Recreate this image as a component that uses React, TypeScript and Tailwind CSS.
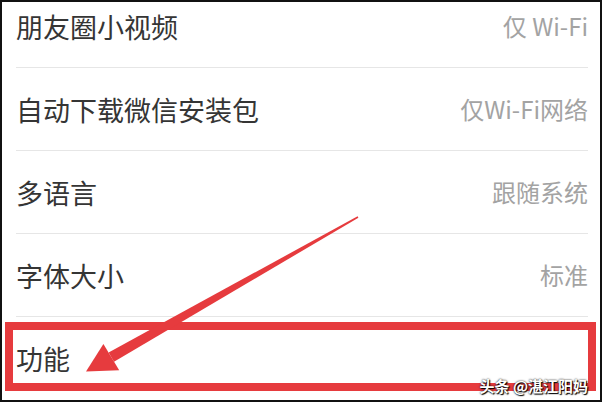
const rows = [
  { label: "朋友圈小视频", value: "仅 Wi-Fi" },
  { label: "自动下载微信安装包", value: "仅Wi-Fi网络" },
  { label: "多语言", value: "跟随系统" },
  { label: "字体大小", value: "标准" },
  { label: "功能", value: "" },
];

export default function App() {
  return (
    <div className="relative h-[402px] w-[602px] overflow-hidden border-2 border-[#111] bg-white font-['Noto_Sans_CJK_SC','Noto_Sans',sans-serif]">
      <div className="-mt-[17px] flex flex-col">
        {rows.map((row, i) => (
          <div
            key={row.label}
            className={
              "ml-[14px] mr-[12px] flex h-[83px] items-center justify-between " +
              (i < rows.length - 1 ? "border-b border-[#e6e6e6]" : "")
            }
          >
            <span className="text-[27px] leading-none text-[#353535]">{row.label}</span>
            <span className="text-[24px] leading-none text-[#a3a3a3]">{row.value}</span>
          </div>
        ))}
      </div>

      {/* highlight box */}
      <div className="absolute left-[3px] top-[320px] h-[69px] w-[591px] border-[8px] border-[#e63b3e]" />

      {/* arrow */}
      <svg className="absolute left-0 top-0" width="602" height="402" viewBox="-2 -2 602 402">
        <polygon
          points="354.4,213.7 353.6,212.3 104.6,348.4 110,357.8"
          fill="#e63b3e"
        />
        <polygon points="82,367.5 99.4,339.9 115.2,366.3" fill="#e63b3e" />
      </svg>

      <div className="absolute bottom-[7px] right-[12px] text-[15px] font-bold leading-none text-white [text-shadow:0_0_2px_#000,1px_1px_1px_#000]">
        头条 @湛江阳妈
      </div>
    </div>
  );
}
